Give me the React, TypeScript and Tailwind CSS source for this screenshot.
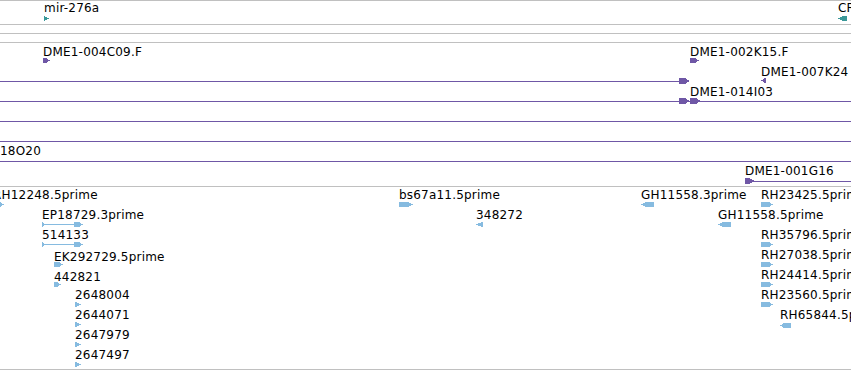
import React from 'react'

type Dir = 'r' | 'l'
type Glyph = { x: number; y: number; w: number; h: number; dir: Dir; tip: number }
type Label = { text: string; x: number; cap: number }
type Bar = { x1: number; x2: number; y: number }

type TrackData = {
  top: number // page y of the padding box
  height: number
  color: string
  labels: Label[]
  glyphs: Glyph[]
  bars: Bar[]
}

const TEAL = '#3a9898'
const PURPLE = '#6f57a6'
const BLUE = '#86bbe0'

const g = (x: number, y: number, w: number, h: number, dir: Dir, tip = 4): Glyph => ({ x, y, w, h, dir, tip })

const mirTrack: TrackData = {
  top: 1,
  height: 23,
  color: TEAL,
  labels: [
    { text: 'mir-276a', x: 44, cap: 3 },
    { text: 'CR', x: 838, cap: 3 },
  ],
  glyphs: [g(44, 16, 5, 5, 'r', 5), g(838, 16, 9, 5, 'l', 5)],
  bars: [],
}

const cloneTrack: TrackData = {
  top: 43,
  height: 143,
  color: PURPLE,
  labels: [
    { text: 'DME1-004C09.F', x: 43, cap: 47 },
    { text: 'DME1-002K15.F', x: 690, cap: 47 },
    { text: 'DME1-007K24', x: 761, cap: 67 },
    { text: 'DME1-014I03', x: 690, cap: 87 },
    { text: '18O20', x: 0, cap: 146 },
    { text: 'DME1-001G16', x: 745, cap: 166 },
  ],
  glyphs: [
    g(43, 58, 7, 5, 'r'),
    g(690, 58, 9, 5, 'r'),
    g(761, 78, 5, 5, 'l', 4),
    g(679, 78, 11, 6, 'r', 5),
    g(679, 98, 11, 6, 'r', 5),
    g(690, 98, 11, 6, 'r', 5),
    g(745, 178, 10, 6, 'r', 6),
  ],
  bars: [
    { x1: 0, x2: 680, y: 81 },
    { x1: 0, x2: 851, y: 101 },
    { x1: 0, x2: 851, y: 121 },
    { x1: 0, x2: 851, y: 141 },
    { x1: 0, x2: 851, y: 161 },
    { x1: 750, x2: 851, y: 181 },
  ],
}

const estTrack: TrackData = {
  top: 187,
  height: 182,
  color: BLUE,
  labels: [
    { text: 'RH12248.5prime', x: -7, cap: 190 },
    { text: 'EP18729.3prime', x: 42, cap: 210 },
    { text: '514133', x: 42, cap: 230 },
    { text: 'EK292729.5prime', x: 54, cap: 252 },
    { text: '442821', x: 54, cap: 272 },
    { text: '2648004', x: 75, cap: 290 },
    { text: '2644071', x: 75, cap: 310 },
    { text: '2647979', x: 75, cap: 330 },
    { text: '2647497', x: 75, cap: 350 },
    { text: 'bs67a11.5prime', x: 399, cap: 190 },
    { text: '348272', x: 476, cap: 210 },
    { text: 'GH11558.3prime', x: 641, cap: 190 },
    { text: 'GH11558.5prime', x: 718, cap: 210 },
    { text: 'RH23425.5prime', x: 761, cap: 190 },
    { text: 'RH35796.5prime', x: 761, cap: 230 },
    { text: 'RH27038.5prime', x: 761, cap: 250 },
    { text: 'RH24414.5prime', x: 761, cap: 270 },
    { text: 'RH23560.5prime', x: 761, cap: 290 },
    { text: 'RH65844.5prime', x: 780, cap: 310 },
  ],
  glyphs: [
    g(-8, 202, 12, 5, 'r'),
    g(42, 222, 4, 5, 'r'),
    g(74, 222, 9, 5, 'r'),
    g(42, 242, 4, 5, 'r'),
    g(74, 242, 9, 5, 'r'),
    g(54, 262, 9, 5, 'r'),
    g(54, 282, 7, 5, 'r'),
    g(75, 302, 6, 5, 'r', 5),
    g(75, 322, 6, 5, 'r', 5),
    g(75, 342, 6, 5, 'r', 5),
    g(75, 362, 6, 5, 'r', 5),
    g(399, 202, 14, 5, 'r', 5),
    g(476, 222, 7, 5, 'l', 6),
    g(641, 202, 13, 5, 'l', 5),
    g(718, 222, 13, 5, 'l', 5),
    g(761, 202, 12, 5, 'r'),
    g(761, 242, 12, 5, 'r'),
    g(761, 262, 12, 5, 'r'),
    g(761, 282, 12, 5, 'r'),
    g(761, 302, 12, 5, 'r'),
    g(780, 323, 11, 5, 'l'),
  ],
  bars: [
    { x1: 42, x2: 78, y: 224 },
    { x1: 42, x2: 78, y: 244 },
  ],
}

function points({ x, y, w, h, dir, tip }: Glyph) {
  const m = y + h / 2
  if (dir === 'r') {
    return `${x},${y} ${x + w - tip},${y} ${x + w},${m} ${x + w - tip},${y + h} ${x},${y + h}`
  }
  return `${x + tip},${y} ${x + w},${y} ${x + w},${y + h} ${x + tip},${y + h} ${x},${m}`
}

function Track({ data, className }: { data: TrackData; className: string }) {
  const { top, height, color, labels, glyphs, bars } = data
  return (
    <div className={`relative overflow-hidden ${className}`}>
      <svg
        className="absolute left-0 top-0"
        width={851}
        height={height}
        viewBox={`0 ${top} 851 ${height}`}
        shapeRendering="crispEdges"
      >
        {bars.map((b, i) => (
          <rect key={i} x={b.x1} y={b.y} width={b.x2 - b.x1} height={1} fill={color} />
        ))}
        {glyphs.map((gl, i) => (
          <polygon key={i} points={points(gl)} fill={color} />
        ))}
      </svg>
      {labels.map((l) => (
        <span
          key={l.text}
          className="absolute whitespace-nowrap text-[12px] leading-[12px] tracking-[0.2px] text-black"
          style={{ left: l.x, top: l.cap - 1.5 - top }}
        >
          {l.text}
        </span>
      ))}
    </div>
  )
}

export default function App() {
  return (
    <div className="w-[851px] h-[370px] bg-white overflow-hidden font-['DejaVu_Sans',sans-serif]">
      <Track data={mirTrack} className="h-[24px] border-t border-[#c0c0c0]" />
      <div className="h-[9px] border-t border-[#c0c0c0]" />
      <div className="h-[9px] border-t border-[#c0c0c0]" />
      <Track data={cloneTrack} className="h-[144px] border-t border-[#c0c0c0]" />
      <Track data={estTrack} className="h-[184px] border-y border-[#c0c0c0]" />
    </div>
  )
}
